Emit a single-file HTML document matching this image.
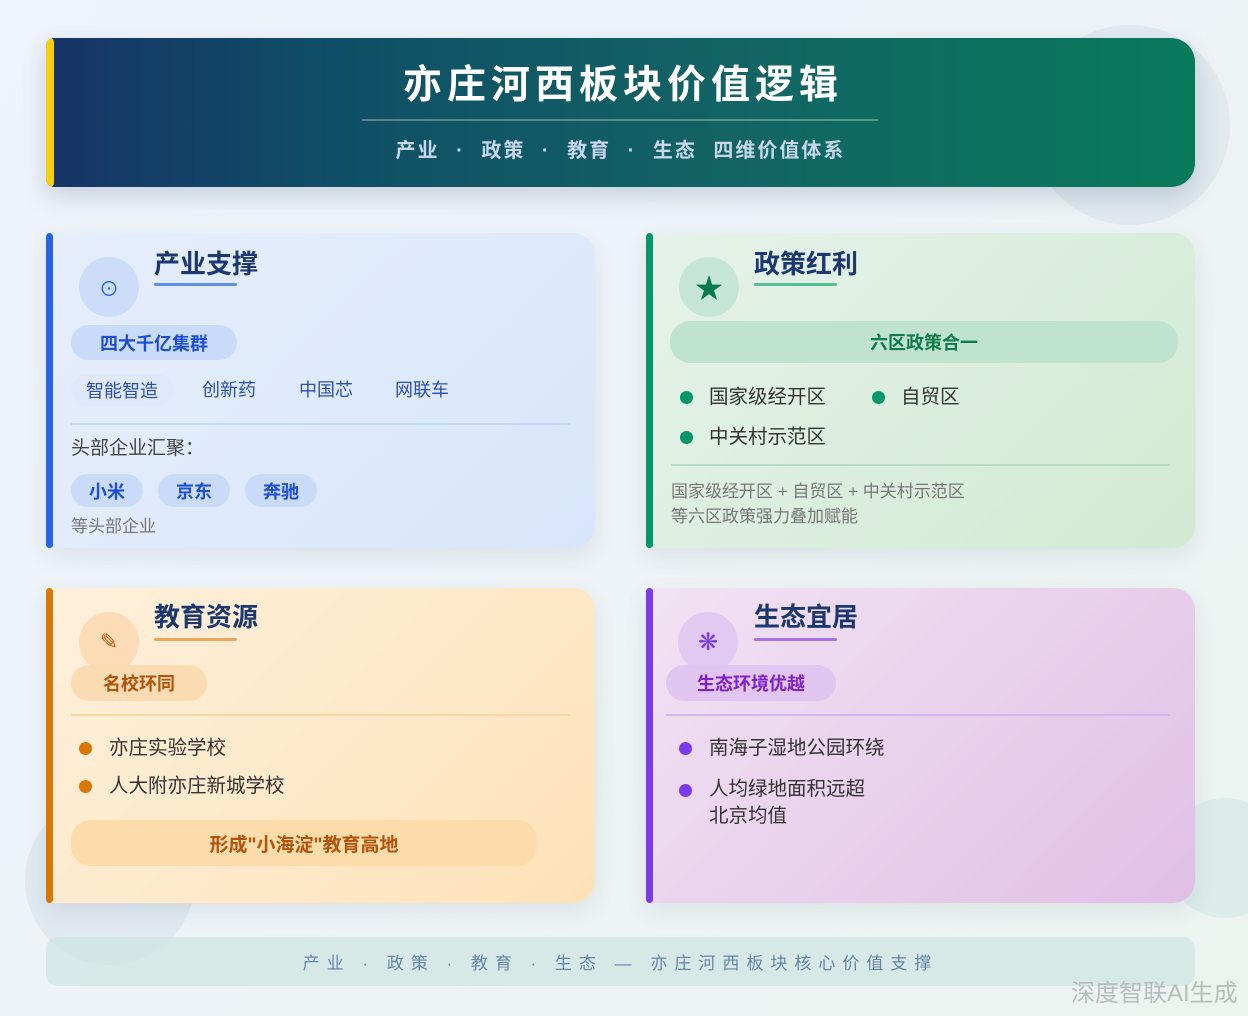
<!DOCTYPE html>
<html><head><meta charset="utf-8"><style>
*{margin:0;padding:0;box-sizing:border-box}
body{width:1248px;height:1016px;overflow:hidden;font-family:"Liberation Sans","Noto Sans CJK SC",sans-serif;background:linear-gradient(135deg,#eef3fc 0%,#edf3f6 50%,#ecf4f0 100%);position:relative}
.abs{position:absolute}
.circ{position:absolute;border-radius:50%}
.hdr{left:46px;top:38px;width:1149px;height:149px;border-radius:8px 24px 24px 8px;background:linear-gradient(90deg,#163468 0%,#0f4e66 25%,#126464 60%,#087a5a 100%);box-shadow:0 10px 24px rgba(40,60,100,.18);overflow:hidden}
.hdr .bar{position:absolute;left:0;top:0;width:8px;height:100%;background:#f5cf10;border-radius:4px}
.card{position:absolute;width:549px;height:315px;border-radius:6px 22px 22px 6px;box-shadow:0 8px 22px rgba(60,80,120,.10)}
.card .lb{position:absolute;left:0;top:0;width:7px;height:100%;border-radius:4px}
.ic{position:absolute;left:33px;top:24px;width:60px;height:60px;border-radius:50%;display:flex;align-items:center;justify-content:center;font-size:24px}
.ttl{position:absolute;left:108px;top:13px;font-size:26px;font-weight:bold;color:#1c3870;line-height:36px}
.ul{position:absolute;left:108px;top:50px;width:83px;height:3px;border-radius:2px}
.pill{position:absolute;border-radius:20px;font-weight:bold;font-size:18px;display:flex;align-items:center;justify-content:center}
.div{position:absolute;left:25px;height:2px;width:499px}
.t{position:absolute;white-space:nowrap;line-height:24px}
.dot{position:absolute;width:13px;height:13px;border-radius:50%}
.b{font-size:19.5px;color:#333}
</style></head><body>
<div class="circ" style="left:1030px;top:25px;width:200px;height:200px;background:rgba(200,215,225,.35)"></div>
<div class="circ" style="left:25px;top:795px;width:170px;height:170px;background:rgba(200,215,225,.35)"></div>
<div class="circ" style="left:1165px;top:798px;width:120px;height:120px;background:rgba(200,225,220,.4)"></div>

<div class="abs hdr"><div class="bar"></div>
<div class="t" style="left:0;width:1149px;text-align:center;top:25px;font-size:39px;line-height:46px;font-weight:bold;color:#fff;letter-spacing:5px;padding-left:5px">亦庄河西板块价值逻辑</div>
<div class="abs" style="left:316px;top:81px;width:516px;height:2px;background:rgba(255,255,255,.3)"></div>
<div class="t" style="left:0;width:1149px;text-align:center;top:101px;font-size:20px;color:#c5d6ee;font-weight:bold;letter-spacing:2px;word-spacing:9px">产业 · 政策 · 教育 · 生态 四维价值体系</div>
</div>

<div class="card" style="left:46px;top:233px;background:linear-gradient(135deg,#e6eefc,#d8e6fb)">
<div class="lb" style="background:#2563eb"></div>
<div class="ic" style="background:#cddcf8;color:#2563eb;font-size:20px">⊙</div>
<div class="ttl">产业支撑</div><div class="ul" style="background:#5b8fe8"></div>
<div class="pill" style="left:25px;top:92px;width:166px;height:35px;background:#c9dbf8;color:#1d4ed8">四大千亿集群</div>
<div class="pill" style="left:25px;top:141px;width:102px;height:32px;background:#dfe9fb;font-weight:normal;color:#2a50b8">智能智造</div>
<div class="t" style="left:156px;top:145px;font-size:18px;color:#2a50b8">创新药</div>
<div class="t" style="left:253px;top:145px;font-size:18px;color:#2a50b8">中国芯</div>
<div class="t" style="left:349px;top:145px;font-size:18px;color:#2a50b8">网联车</div>
<div class="div" style="top:190px;background:#c8d9f4"></div>
<div class="t" style="left:25px;top:204px;font-size:19px;color:#444">头部企业汇聚：</div>
<div class="pill" style="left:25px;top:241px;width:72px;height:33px;background:#c9dbf8;color:#1d4ed8">小米</div>
<div class="pill" style="left:112px;top:241px;width:72px;height:33px;background:#c9dbf8;color:#1d4ed8">京东</div>
<div class="pill" style="left:199px;top:241px;width:72px;height:33px;background:#c9dbf8;color:#1d4ed8">奔驰</div>
<div class="t" style="left:25px;top:282px;font-size:17px;color:#777">等头部企业</div>
</div>

<div class="card" style="left:646px;top:233px;background:linear-gradient(135deg,#e6f2ea,#d1ead2)">
<div class="lb" style="background:#059669"></div>
<div class="ic" style="background:#c5e6d6;color:#047a52;font-size:28px">★</div>
<div class="ttl">政策红利</div><div class="ul" style="background:#55bf95"></div>
<div class="pill" style="left:24px;top:88px;width:508px;height:42px;background:#bfe3cf;color:#0f7a4a">六区政策合一</div>
<div class="dot" style="left:34px;top:158px;background:#059669"></div>
<div class="t b" style="left:63px;top:152px">国家级经开区</div>
<div class="dot" style="left:226px;top:158px;background:#059669"></div>
<div class="t b" style="left:255px;top:152px">自贸区</div>
<div class="dot" style="left:34px;top:198px;background:#059669"></div>
<div class="t b" style="left:63px;top:192px">中关村示范区</div>
<div class="div" style="top:231px;background:#b7dcc6"></div>
<div class="t" style="left:25px;top:247px;font-size:17px;color:#777">国家级经开区 + 自贸区 + 中关村示范区</div>
<div class="t" style="left:25px;top:272px;font-size:17px;color:#777">等六区政策强力叠加赋能</div>
</div>

<div class="card" style="left:46px;top:588px;background:linear-gradient(135deg,#fff0dc,#fde2b8)">
<div class="lb" style="background:#d97706"></div>
<div class="ic" style="background:#fbdcb6;color:#c2570a;font-size:22px;top:24px">✎</div>
<div class="ttl" style="top:11px">教育资源</div><div class="ul" style="background:#f0a65a"></div>
<div class="pill" style="left:25px;top:77px;width:136px;height:36px;background:#fbdbb2;color:#b45309">名校环同</div>
<div class="div" style="top:126px;background:#f8d6a8"></div>
<div class="dot" style="left:33px;top:154px;background:#d97706"></div>
<div class="t b" style="left:63px;top:148px">亦庄实验学校</div>
<div class="dot" style="left:33px;top:192px;background:#d97706"></div>
<div class="t b" style="left:63px;top:186px">人大附亦庄新城学校</div>
<div class="pill" style="left:25px;top:232px;width:466px;height:46px;background:#fcdcaa;color:#b45309;font-size:19px">形成"小海淀"教育高地</div>
</div>

<div class="card" style="left:646px;top:588px;background:linear-gradient(135deg,#f1e3f3,#e2bfe6)">
<div class="lb" style="background:#7c3aed"></div>
<div class="ic" style="background:#e2c9f2;color:#7c3aed;font-size:24px;left:32px">❋</div>
<div class="ttl" style="top:11px">生态宜居</div><div class="ul" style="background:#a96ee8"></div>
<div class="pill" style="left:20px;top:77px;width:170px;height:36px;background:#e0c6f1;color:#7e22ce">生态环境优越</div>
<div class="div" style="left:20px;top:126px;background:#d6b4ee;width:504px"></div>
<div class="dot" style="left:33px;top:154px;background:#7c3aed"></div>
<div class="t b" style="left:63px;top:148px">南海子湿地公园环绕</div>
<div class="dot" style="left:33px;top:196px;background:#7c3aed"></div>
<div class="t b" style="left:63px;top:189px">人均绿地面积远超</div>
<div class="t b" style="left:63px;top:216px">北京均值</div>
</div>

<div class="abs" style="left:46px;top:937px;width:1149px;height:49px;border-radius:12px;background:rgba(205,228,225,.7)"></div>
<div class="t" style="left:46px;width:1149px;text-align:center;top:952px;font-size:17px;color:#6584a8;letter-spacing:7px">产业 · 政策 · 教育 · 生态 — 亦庄河西板块核心价值支撑</div>
<div class="t" style="left:1071px;top:980px;font-size:24px;line-height:28px;color:#b8bcbc">深度智联AI生成</div>
</body></html>
